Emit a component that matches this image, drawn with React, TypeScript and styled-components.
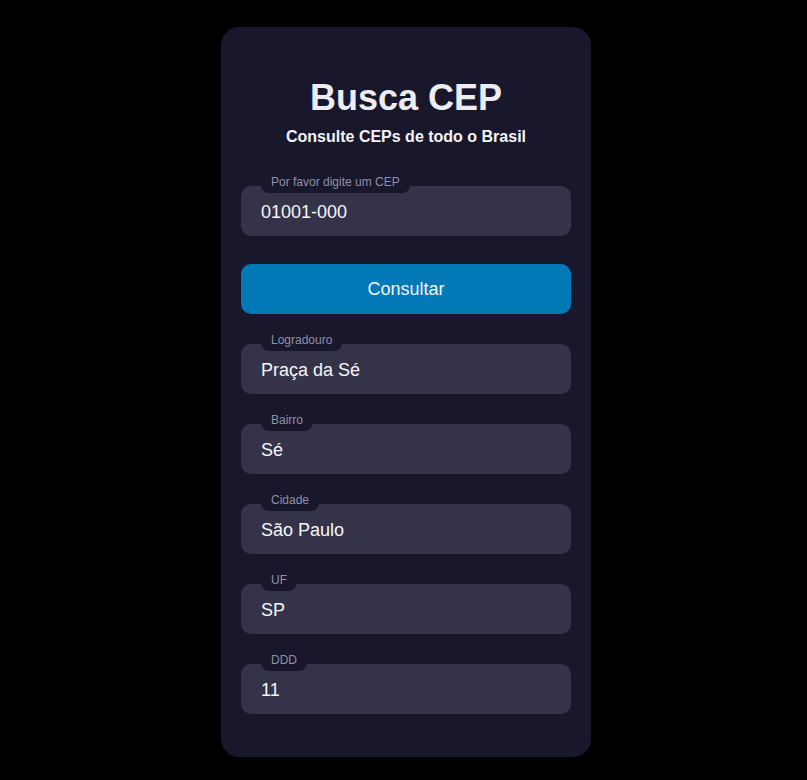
import React from 'react';
import styled, { createGlobalStyle } from 'styled-components';

const GlobalStyle = createGlobalStyle`
  body {
    margin: 0;
    background-color: #000;
    font-family: "Liberation Sans", Arial, sans-serif;
  }
`;

const Page = styled.div`
  display: flex;
  justify-content: center;
  padding: 27px 0 24px 5px;
`;

const Card = styled.main`
  width: 370px;
  box-sizing: border-box;
  padding: 49px 20px 43px;
  background-color: #18172c;
  border-radius: 18px;
`;

const Header = styled.header`
  text-align: center;
  margin-bottom: 40px;
`;

const Title = styled.h1`
  margin: 0;
  font-size: 36px;
  line-height: 43px;
  font-weight: 700;
  color: #ececf1;
`;

const Subtitle = styled.p`
  margin: 8px 0 0;
  font-size: 16px;
  line-height: 19px;
  font-weight: 700;
  color: #f4f4f6;
`;

const Form = styled.form`
  display: flex;
  flex-direction: column;
  gap: 30px;
`;

const SearchGroup = styled.div`
  display: flex;
  flex-direction: column;
  gap: 28px;
`;

const Field = styled.label`
  position: relative;
  display: block;
`;

const Tag = styled.span`
  position: absolute;
  top: -14px;
  left: 20px;
  padding: 0 10px;
  height: 21px;
  line-height: 21px;
  font-size: 12px;
  color: #9290a8;
  background-color: #18172c;
  border-radius: 8px;
`;

const Input = styled.input`
  display: block;
  width: 100%;
  box-sizing: border-box;
  height: 50px;
  padding: 3px 20px 0;
  border: none;
  border-radius: 10px;
  background-color: #34334a;
  color: #f6f6f8;
  font-family: inherit;
  font-size: 18px;
  outline: none;
`;

const Button = styled.button`
  height: 50px;
  padding: 1px 0 0;
  border: none;
  border-radius: 10px;
  background-color: #0079b6;
  color: #f2f6fa;
  font-family: inherit;
  font-size: 18px;
  cursor: pointer;
`;

const results = [
  { label: 'Logradouro', value: 'Praça da Sé' },
  { label: 'Bairro', value: 'Sé' },
  { label: 'Cidade', value: 'São Paulo' },
  { label: 'UF', value: 'SP' },
  { label: 'DDD', value: '11' },
];

function App() {
  return (
    <>
      <GlobalStyle />
      <Page>
        <Card>
          <Header>
            <Title>Busca CEP</Title>
            <Subtitle>Consulte CEPs de todo o Brasil</Subtitle>
          </Header>
          <Form onSubmit={(e) => e.preventDefault()}>
            <SearchGroup>
              <Field>
                <Tag>Por favor digite um CEP</Tag>
                <Input defaultValue="01001-000" />
              </Field>
              <Button type="submit">Consultar</Button>
            </SearchGroup>
            {results.map((r) => (
              <Field key={r.label}>
                <Tag>{r.label}</Tag>
                <Input value={r.value} readOnly />
              </Field>
            ))}
          </Form>
        </Card>
      </Page>
    </>
  );
}

export default App;
